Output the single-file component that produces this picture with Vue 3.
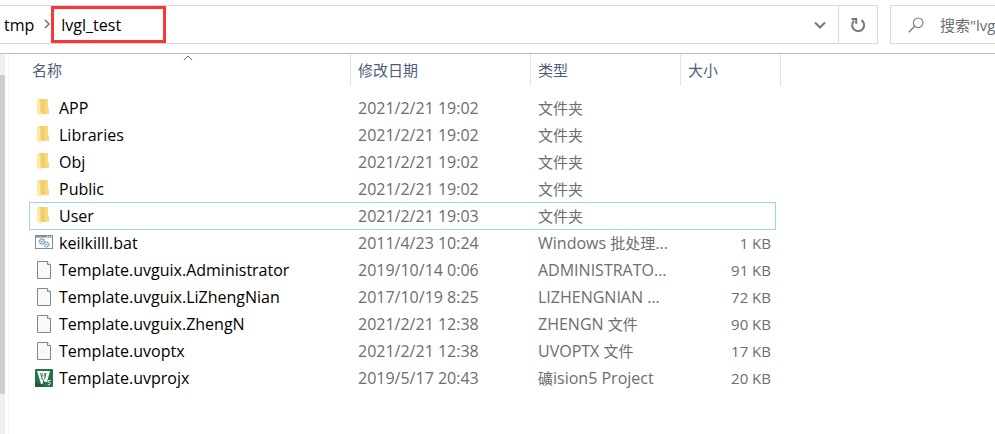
<script setup>
import { ref } from 'vue'

const selected = ref('User')
const query = ref('')

const files = [
  { name: 'APP', date: '2021/2/21 19:02', type: '文件夹', size: '', icon: 'folder' },
  { name: 'Libraries', date: '2021/2/21 19:02', type: '文件夹', size: '', icon: 'folder' },
  { name: 'Obj', date: '2021/2/21 19:02', type: '文件夹', size: '', icon: 'folder' },
  { name: 'Public', date: '2021/2/21 19:02', type: '文件夹', size: '', icon: 'folder' },
  { name: 'User', date: '2021/2/21 19:03', type: '文件夹', size: '', icon: 'folder' },
  { name: 'keilkilll.bat', date: '2011/4/23 10:24', type: 'Windows 批处理...', size: '1 KB', icon: 'batch' },
  { name: 'Template.uvguix.Administrator', date: '2019/10/14 0:06', type: 'ADMINISTRATO...', size: '91 KB', icon: 'file' },
  { name: 'Template.uvguix.LiZhengNian', date: '2017/10/19 8:25', type: 'LIZHENGNIAN ...', size: '72 KB', icon: 'file' },
  { name: 'Template.uvguix.ZhengN', date: '2021/2/21 12:38', type: 'ZHENGN 文件', size: '90 KB', icon: 'file' },
  { name: 'Template.uvoptx', date: '2021/2/21 12:38', type: 'UVOPTX 文件', size: '17 KB', icon: 'file' },
  { name: 'Template.uvprojx', date: '2019/5/17 20:43', type: '礦ision5 Project', size: '20 KB', icon: 'keil' },
]

// Splits a label into Chinese and Latin runs, which are set in different sizes.
const runs = (text) =>
  (text.match(/[\u4e00-\u9fff]+|[^\u4e00-\u9fff]+/g) || []).map((part) => ({
    part,
    han: /[\u4e00-\u9fff]/.test(part),
  }))
</script>

<template>
  <div class="explorer">
    <header class="toolbar">
      <div class="address">
        <nav class="crumbs" aria-label="path">
          <button type="button" class="crumb">tmp</button>
          <svg class="crumb-arrow" width="8" height="10" viewBox="0 0 8 10" aria-hidden="true">
            <path d="M2 1l4 4-4 4" fill="none" stroke="#777" stroke-width="1.6" />
          </svg>
          <button type="button" class="crumb marked">lvgl_test</button>
        </nav>
        <button type="button" class="tool history" aria-label="history">
          <svg width="14" height="10" viewBox="0 0 14 10" aria-hidden="true">
            <path d="M2 2.5l5 5 5-5" fill="none" stroke="#777" stroke-width="2" />
          </svg>
        </button>
        <button type="button" class="tool refresh" aria-label="refresh">
          <svg width="16" height="16" viewBox="0 0 16 16" aria-hidden="true">
            <path d="M11.4 3.1A6 6 0 1 1 4 3.8" fill="none" stroke="#777" stroke-width="2" />
            <path d="M1.5 2H6.2V6.8" fill="none" stroke="#777" stroke-width="2" />
          </svg>
        </button>
      </div>
      <label class="search">
        <svg width="16" height="16" viewBox="0 0 16 16" aria-hidden="true">
          <circle cx="10.2" cy="5.8" r="4.8" fill="none" stroke="#777" stroke-width="1.1" />
          <path d="M6.7 9.3L.8 15.2" stroke="#777" stroke-width="1.3" />
        </svg>
        <input v-model="query" type="text" placeholder="搜索&quot;lvgl_test&quot;" aria-label="search" />
      </label>
    </header>

    <main class="content">
      <div class="scroll-track"><div class="scroll-thumb"></div></div>
      <div class="pane">
        <table class="files">
          <colgroup>
            <col class="col-name" />
            <col class="col-date" />
            <col class="col-type" />
            <col class="col-size" />
          </colgroup>
          <thead>
            <tr>
              <th>
                名称
                <svg class="sort" width="10" height="6" viewBox="0 0 10 6" aria-hidden="true">
                  <path d="M.8 5.2L5 1l4.200 4.200" fill="none" stroke="#666" stroke-width="1" />
                </svg>
              </th>
              <th>修改日期</th>
              <th>类型</th>
              <th>大小</th>
            </tr>
          </thead>
          <tbody>
            <tr
              v-for="file in files"
              :key="file.name"
              :class="{ selected: selected === file.name }"
              @click="selected = file.name"
            >
              <td>
                <span class="name">
                  <svg v-if="file.icon === 'folder'" class="icon" width="18" height="18" viewBox="0 0 18 18" aria-hidden="true">
                    <path d="M4 0H13V9.500L14 10.500V15H4Z" fill="#f3cf6b" />
                    <path d="M10 0H13V9.500H14V15H10Z" fill="#f7d97f" />
                    <path d="M2 0L6 3V17L2 15Z" fill="#ffe9a6" />
                    <path d="M6 3.500V13" stroke="#e7bd58" stroke-width=".7" />
                  </svg>
                  <svg v-else-if="file.icon === 'batch'" class="icon" width="18" height="18" viewBox="0 0 18 18" aria-hidden="true">
                    <rect x=".5" y="1.500" width="17" height="13" fill="#fbfbfb" stroke="#858b8f" />
                    <path d="M0 2.500H18" stroke="#858b8f" stroke-width="2" />
                    <path d="M12 2.500h1M14 2.500h1M16 2.500h1" stroke="#fff" />
                    <circle cx="7" cy="7.500" r="2.600" fill="#e8eaec" stroke="#8c959b" stroke-width="1.500" stroke-dasharray="1.200 .5" />
                    <circle cx="7" cy="7.500" r=".8" fill="#7d858a" />
                    <circle cx="11.500" cy="10.500" r="2.300" fill="#e4f2fa" stroke="#83a9c2" stroke-width="1.400" stroke-dasharray="1.200 .5" />
                    <circle cx="11.500" cy="10.500" r=".7" fill="#6c99b5" />
                  </svg>
                  <svg v-else-if="file.icon === 'file'" class="icon" width="18" height="18" viewBox="0 0 18 18" aria-hidden="true">
                    <path d="M2.500 .5H12.500L15.500 3.500V17.500H2.500Z" fill="#f8f9f9" stroke="#858585" />
                    <path d="M12.500 .5V3.500H15.500" fill="#fff" stroke="#858585" />
                  </svg>
                  <svg v-else class="icon" width="18" height="18" viewBox="0 0 18 18" aria-hidden="true">
                    <rect width="18" height="18" rx="1" fill="#287247" />
                    <path d="M0 12L10 18H1Q0 18 0 17Z" fill="#1d5e38" />
                    <path d="M2 2H15L12 13H9.500L8.500 10L7.500 15H6Z" fill="#f5faf6" />
                    <path d="M5.500 4L7.500 11M11 4L9.500 10" stroke="#287247" stroke-width="1" />
                    <path d="M7.500 4V7H9.500V4" fill="none" stroke="#287247" stroke-width=".6" />
                    <path d="M15.700 11.500H13.200V13.300H14.300Q15.700 13.500 15.500 14.800Q15.200 16 12.800 15.600" fill="none" stroke="#e4f1e7" stroke-width="1" />
                  </svg>
                  {{ file.name }}
                </span>
              </td>
              <td class="latin">{{ file.date }}</td>
              <td class="latin"><span v-for="(run, i) in runs(file.type)" :key="i" :class="{ han: run.han }">{{ run.part }}</span></td>
              <td class="size">{{ file.size }}</td>
            </tr>
          </tbody>
        </table>
      </div>
    </main>
  </div>
</template>

<style>
body {
  margin: 0;
  background: #fff;
}
</style>

<style scoped>
.explorer {
  display: flex;
  flex-direction: column;
  min-height: 100vh;
  overflow: hidden;
  background: #fff;
  color: #6d6d6d;
  font-family: "Open Sans", "Noto Sans CJK SC", sans-serif;
  font-size: 15px;
  line-height: 20px;
}
button,
input {
  font: inherit;
  border: 0;
  background: none;
  padding: 0;
}
.toolbar {
  display: flex;
  gap: 12px;
  padding: 5px 0 9px;
  border-bottom: 1px solid #bcbcbc;
}
.address {
  display: flex;
  flex: 1;
  height: 37px;
  border: 1px solid #d9d9d9;
  border-left: 0;
}
.crumbs {
  display: flex;
  flex: 1;
  align-items: center;
  padding-left: 4px;
}
.crumb {
  color: #000;
  font-size: 16px;
}
.crumb-arrow {
  margin: 0 0 2px 9px;
}
.marked {
  box-sizing: border-box;
  width: 115px;
  height: 37px;
  padding-left: 7px;
  border: 3px solid #fb3636;
  text-align: left;
}
.tool {
  display: flex;
  align-items: center;
  justify-content: center;
}
.history {
  width: 36px;
}
.refresh {
  width: 39px;
  border-left: 1px solid #d9d9d9;
}
.search {
  display: flex;
  align-items: center;
  gap: 16px;
  box-sizing: border-box;
  width: 105px;
  padding-left: 17px;
  border: 1px solid #d9d9d9;
  border-right: 0;
}
.search svg {
  flex: none;
}
.search input {
  flex: 1;
  min-width: 0;
  outline: 0;
}
.search input::placeholder {
  color: #6d6d6d;
  opacity: 1;
}
.content {
  display: flex;
  flex: 1;
}
.scroll-track {
  width: 5px;
  padding: 21px 0 40px;
  box-sizing: border-box;
  background: #f0f0f0;
}
.scroll-thumb {
  height: 100%;
  background: #cdcdcd;
}
.pane {
  flex: 1;
  margin-left: 3px;
  padding-left: 20px;
  border-left: 1px solid #f3f3f3;
}
.files {
  width: 752px;
  table-layout: fixed;
  border-collapse: separate;
  border-spacing: 0;
}
.col-name {
  width: 322px;
}
.col-date {
  width: 180px;
}
.col-type {
  width: 150px;
}
.col-size {
  width: 100px;
}
th {
  position: relative;
  height: 32px;
  padding: 0 0 0 7px;
  border-right: 1px solid #e3e3e3;
  color: #4c607a;
  font-weight: 400;
  text-align: left;
}
th:first-child {
  padding-left: 3px;
}
.sort {
  position: absolute;
  top: 1px;
  left: 50%;
  margin-left: -7px;
}
tbody::before {
  content: "";
  display: block;
  height: 8px;
}
tbody tr {
  position: relative;
}
td {
  height: 27px;
  padding: 0 0 0 7px;
  overflow: hidden;
  white-space: nowrap;
}
td:first-child {
  padding-left: 6px;
}
.latin {
  font-size: 16px;
}
.han {
  font-size: 15px;
}
.name {
  display: flex;
  align-items: center;
  gap: 6px;
  color: #000;
  font-size: 16px;
}
.icon {
  flex: none;
}
.size {
  padding-right: 10px;
  text-align: right;
}
.selected::after {
  content: "";
  position: absolute;
  inset: 0 5px -1px 0;
  border: 1px solid #99d1ff;
  pointer-events: none;
}
</style>
